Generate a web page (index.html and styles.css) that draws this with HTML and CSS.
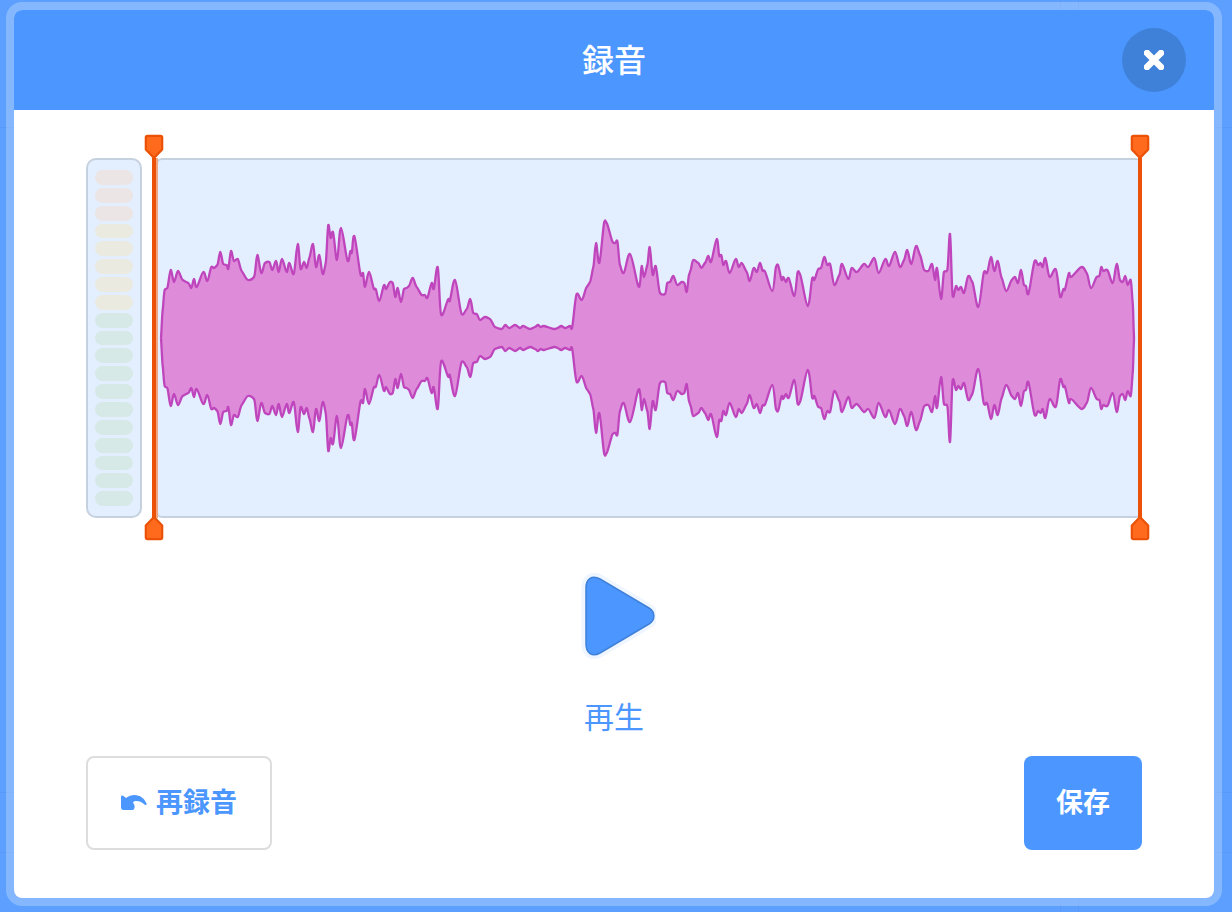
FILE: index.html
```html
<!DOCTYPE html>
<html lang="ja">
<head>
    <meta charset="UTF-8">
    <meta name="viewport" content="width=device-width, initial-scale=1.0">
    <title>録音</title>
    <link rel="stylesheet" href="styles.css">
</head>
<body>
    <div class="modal">
        <!-- Header -->
        <div class="modal-header">
            <div class="modal-title">録音</div>
            <button class="close-button" aria-label="閉じる">
                <svg width="20" height="20" viewBox="0 0 20 20">
                    <path class="close-icon" d="M3 3 L17 17 M17 3 L3 17"/>
                </svg>
            </button>
        </div>

        <div class="modal-body">
            <!-- Meter and waveform -->
            <div class="editor">
                <div class="meter">
                    <span class="pill pill-red"></span>
                    <span class="pill pill-red"></span>
                    <span class="pill pill-red"></span>
                    <span class="pill pill-yellow"></span>
                    <span class="pill pill-yellow"></span>
                    <span class="pill pill-yellow"></span>
                    <span class="pill pill-yellow"></span>
                    <span class="pill pill-yellow"></span>
                    <span class="pill pill-green"></span>
                    <span class="pill pill-green"></span>
                    <span class="pill pill-green"></span>
                    <span class="pill pill-green"></span>
                    <span class="pill pill-green"></span>
                    <span class="pill pill-green"></span>
                    <span class="pill pill-green"></span>
                    <span class="pill pill-green"></span>
                    <span class="pill pill-green"></span>
                    <span class="pill pill-green"></span>
                    <span class="pill pill-green"></span>
                </div>
                <div class="wave-panel">
                    <svg class="wave" viewBox="158 -178 982 356">
                        <defs>
                            <path id="envelope" d=""/>
                        </defs>
                        <use class="wave-shape" href="#envelope"/>
                        <use class="wave-shape" href="#envelope" transform="scale(1,-1)"/>
                    </svg>

                    <!-- Trim handles -->
                    <div class="trim-line trim-left">
                        <svg class="trim-head trim-head-top" width="20" height="26" viewBox="0 0 20 26"><path d="M3.500 1.800H16.500Q18.200 1.800 18.200 3.500V15.500L10 24L1.800 15.500V3.500Q1.800 1.800 3.500 1.800Z"/></svg>
                        <svg class="trim-head trim-head-bottom" width="20" height="26" viewBox="0 0 20 26"><path d="M3.500 24.200H16.500Q18.200 24.200 18.200 22.500V10.500L10 2L1.800 10.500V22.500Q1.800 24.200 3.500 24.200Z"/></svg>
                    </div>
                    <div class="trim-line trim-right">
                        <svg class="trim-head trim-head-top" width="20" height="26" viewBox="0 0 20 26"><path d="M3.500 1.800H16.500Q18.200 1.800 18.200 3.500V15.500L10 24L1.800 15.500V3.500Q1.800 1.800 3.500 1.800Z"/></svg>
                        <svg class="trim-head trim-head-bottom" width="20" height="26" viewBox="0 0 20 26"><path d="M3.500 24.200H16.500Q18.200 24.200 18.200 22.500V10.500L10 2L1.800 10.500V22.500Q1.800 24.200 3.500 24.200Z"/></svg>
                    </div>
                </div>
            </div>

            <!-- Play -->
            <div class="play-area">
                <svg class="play-icon" width="84" height="88" viewBox="0 0 84 88">
                    <path class="play-halo" d="M14 16C14 7 20 2.500 28 7L77 36C83.500 40 83.500 48 77 52L28 81C20 85.500 14 81 14 72Z"/>
                    <path class="play-shape" d="M14 16C14 7 20 2.500 28 7L77 36C83.500 40 83.500 48 77 52L28 81C20 85.500 14 81 14 72Z"/>
                </svg>
                <div class="play-label">再生</div>
            </div>

            <!-- Buttons -->
            <div class="modal-footer">
                <button class="retry-button">
                    <svg class="retry-icon" width="26" height="16" viewBox="0 0 26 16">
                        <path d="M0 2C0 .5 1.500 0 2.500 1L5 3C7.500 1 10.500 0 13.500 0C19 0 23.500 3.500 25.500 8.500C26 10 24.500 10.500 23.500 9.500C21 7 18 6 15.500 6C14 6 12.800 6.500 12 7.200L13 9.500C14 10.500 14 15 11.500 15H2.500C1 15 0 14 0 12.500Z"/>
                    </svg>
                    <span>再録音</span>
                </button>
                <button class="save-button">保存</button>
            </div>
        </div>
    </div>
    <script src="wave.js"></script>
</body>
</html>
```

FILE: styles.css
```css
body {
    margin: 0;
    height: 912px;
    overflow: hidden;
    background-color: #5c9fff;
    /* faint lines of the page behind the dialog */
    background-image:
        linear-gradient(rgba(60, 110, 200, 0.12), rgba(60, 110, 200, 0.12)),
        linear-gradient(rgba(60, 110, 200, 0.12), rgba(60, 110, 200, 0.12)),
        linear-gradient(rgba(60, 110, 200, 0.12), rgba(60, 110, 200, 0.12)),
        linear-gradient(rgba(60, 110, 200, 0.12), rgba(60, 110, 200, 0.12)),
        linear-gradient(rgba(60, 110, 200, 0.12), rgba(60, 110, 200, 0.12));
    background-size: 1px 100%, 1px 100%, 100% 1px, 100% 1px, 100% 1px;
    background-position: 1060px 0, 1078px 0, 0 127px, 0 792px, 0 852px;
    background-repeat: no-repeat;
    font-family: "Noto Sans CJK JP", "Noto Sans", sans-serif;
}
button {
    font-family: inherit;
    cursor: pointer;
}
.modal {
    box-sizing: border-box;
    width: 1216px;
    height: 904px;
    margin: 2px 0 0 6px;
    border: 8px solid rgba(255, 255, 255, 0.25);
    border-radius: 16px;
    background: #fff;
    background-clip: padding-box;
    display: flex;
    flex-direction: column;
}
.modal-header {
    height: 100px;
    flex-shrink: 0;
    border-radius: 8px 8px 0 0;
    background: #4c97ff;
    display: flex;
    align-items: center;
    justify-content: center;
    position: relative;
}
.modal-title {
    padding-bottom: 4px;
    color: #fff;
    font-size: 32px;
    font-weight: 500;
}
.close-button {
    position: absolute;
    top: 18px;
    right: 28px;
    width: 64px;
    height: 64px;
    padding: 0;
    border: none;
    border-radius: 50%;
    background: #3f81d9;
    display: flex;
    align-items: center;
    justify-content: center;
}
.close-icon {
    fill: none;
    stroke: #fff;
    stroke-width: 6.5;
    stroke-linecap: round;
}
.modal-body {
    flex: 1;
    padding: 48px 72px;
    display: flex;
    flex-direction: column;
}
.editor {
    height: 360px;
    display: flex;
    gap: 14px;
}
.meter {
    box-sizing: border-box;
    width: 56px;
    padding: 10px 7px;
    border: 2px solid #c6d1e0;
    border-radius: 10px;
    background: #e3efff;
    display: flex;
    flex-direction: column;
    gap: 3px;
}
.pill {
    flex: 1;
    border-radius: 8px;
}
.pill-red { background: #ebe5e5; }
.pill-yellow { background: #eaeae0; }
.pill-green { background: #d6e9e7; }
.wave-panel {
    flex: 1;
    box-sizing: border-box;
    border: 2px solid #c6d1e0;
    border-radius: 6px;
    background: #e3efff;
    position: relative;
}
.wave {
    display: block;
    width: 100%;
    height: 100%;
}
.wave-shape {
    fill: #de8cd9;
    stroke: #bf45bd;
    stroke-width: 2.3;
    stroke-linejoin: round;
}
.trim-line {
    position: absolute;
    top: -2px;
    bottom: -2px;
    width: 4px;
    background: #ec5207;
}
.trim-left {
    left: -6px;
    box-shadow: 2px 0 0 #efa582;
}
.trim-right {
    right: -2px;
}
.trim-head {
    position: absolute;
    left: -8px;
}
.trim-head path {
    fill: #ff6a1c;
    stroke: #ec5207;
    stroke-width: 2.2;
    stroke-linejoin: round;
}
.trim-head-top {
    top: -24px;
}
.trim-head-bottom {
    bottom: -23px;
}
.play-area {
    display: flex;
    flex-direction: column;
    align-items: center;
}
.play-icon {
    display: block;
    margin-top: 54px;
}
.play-halo {
    fill: none;
    stroke: #eff6ff;
    stroke-width: 9;
    stroke-linejoin: round;
}
.play-shape {
    fill: #4c97ff;
    stroke: #3f81d9;
    stroke-width: 1.5;
    stroke-linejoin: round;
}
.play-label {
    margin-top: 35px;
    color: #4c97ff;
    font-size: 30px;
    line-height: 40px;
}
.modal-footer {
    margin-top: 21px;
    display: flex;
    justify-content: space-between;
}
.retry-button {
    box-sizing: border-box;
    width: 186px;
    height: 94px;
    padding: 0;
    border: 2px solid #ddd;
    border-radius: 8px;
    background: #fff;
    color: #4c97ff;
    font-size: 27px;
    font-weight: 700;
    display: flex;
    align-items: center;
    justify-content: center;
    gap: 9px;
}
.retry-button span {
    padding-bottom: 6px;
}
.retry-icon path {
    fill: #4c97ff;
}
.save-button {
    width: 118px;
    height: 94px;
    padding: 0 0 6px;
    border: none;
    border-radius: 8px;
    background: #4c97ff;
    color: #fff;
    font-size: 27px;
    font-weight: 700;
}
```

FILE: wave.js
```js
// x on the page, then height above the centre line
const samples = [
    161,0, 162.7,28, 164.7,48, 167.3,50, 170.7,68, 174,56, 178,67, 182.7,58, 188.3,55, 191.3,50, 194,59, 196.7,51,
    203.3,66, 207.3,57, 211.3,71, 214,70, 217.3,73, 220.3,86, 223.3,74, 226.7,73, 228.3,69, 231,87, 234,77, 237.7,79,
    241.7,67, 248,58, 254,61, 257.3,83, 261.3,65, 265,75, 269.3,76, 272.3,68, 276,77, 278.7,66, 282,79, 286.7,66,
    289.3,75, 293.7,64, 297.7,94, 300.7,69, 304,76, 306.7,70, 309.3,80, 313,94, 316,71, 319.3,83, 322.7,64, 325.7,75,
    328.3,113, 330.7,100, 333,106, 337,78, 341,110, 347.7,77, 350.3,87, 351.7,85, 354.3,102, 360.7,63, 363,65, 365,51,
    369,66, 374,49, 375.7,49, 379.3,37, 384,53, 386,49, 390,56, 392.7,55, 395.3,41, 397.7,50, 401,36, 404,49, 406.7,50,
    409,52, 412.7,60, 416.7,51, 421.7,43, 425,43, 427.3,40, 431.7,55, 433.7,49, 437.7,71, 441.3,23, 448.3,39, 449.7,37,
    455,58, 461.7,24, 466.7,29, 470.3,39, 473.3,25, 476.7,24, 480,18, 485,21, 490,19, 495,11, 501.7,9, 505.3,13, 509.3,10,
    515,13, 520,10, 523.3,12, 530,9, 535,11, 538,13, 540.7,11, 544,12, 554,9, 557.7,10, 561.3,12, 565,10, 570,12, 572,10,
    576.7,44, 581.7,38, 586.7,51, 590,56, 593.3,71, 596,95, 599.3,75, 604.3,116, 606.7,115, 612.7,96, 615.3,95, 617.3,97,
    620,73, 623.7,65, 630,84, 638.3,52, 640,55, 641.7,72, 644,61, 647.3,73, 649.7,91, 652.7,63, 655.7,72, 660,45, 665,44,
    667.3,55, 670,56, 673.3,62, 677.3,53, 681.7,56, 684.3,55, 686.7,46, 689,63, 690.7,68, 693.3,78, 698.3,75, 701.3,70,
    705,75, 708.3,82, 711,76, 716.7,99, 719.3,82, 721.3,83, 723.3,73, 726,77, 729.7,65, 735.7,79, 738.7,71, 741.7,75,
    746.7,66, 749.7,57, 753.7,70, 756.7,66, 760,75, 762.7,67, 764.7,67, 772.3,47, 776,71, 778,73, 781.7,58, 783.3,61,
    786,56, 788.7,60, 794.3,42, 797.7,66, 800,64, 807.7,32, 812.3,60, 814.3,58, 818.3,69, 821,70, 824.3,81, 827.3,73,
    830,74, 834.3,53, 839.3,63, 842,74, 848.3,59, 851.7,70, 856.7,66, 864,74, 868.3,71, 874.3,80, 878.7,65, 885.3,79,
    889,72, 895,86, 900,71, 904,78, 907.3,88, 911.3,74, 916,92, 920,83, 924.3,68, 928.3,67, 932,74, 935,58, 937,70,
    941,39, 944,66, 947.3,68, 950,104, 952.7,42, 956,52, 958.3,48, 961,51, 964,45, 968.3,62, 972.3,56, 978.3,31, 984,66,
    987,65, 991,81, 994.3,67, 997.7,77, 1001.7,60, 1006.3,47, 1011.7,58, 1015,61, 1018,55, 1021,68, 1024,53, 1026,52,
    1028.3,44, 1034.7,77, 1038,73, 1040.7,75, 1042.7,71, 1045.3,80, 1049.7,61, 1055.7,69, 1060.3,41, 1063.3,49, 1064.7,48,
    1069,65, 1071,61, 1081.7,71, 1086.7,65, 1091,50, 1096.7,61, 1099.3,62, 1101.3,71, 1103.3,67, 1107.3,68, 1112.7,55,
    1116.7,74, 1120,58, 1122.7,56, 1125.3,62, 1127.7,53, 1130.7,58, 1132.7,35, 1133.7,8, 1134,0
];

// smooth line through the samples, tangents kept short so peaks don't overshoot
const points = [];
for (let i = 0; i < samples.length; i += 2) {
    points.push([samples[i], samples[i + 1]]);
}
let d = `M${points[0][0]} ${points[0][1]}`;
for (let i = 0; i < points.length - 1; i++) {
    const p0 = points[Math.max(i - 1, 0)];
    const p1 = points[i];
    const p2 = points[i + 1];
    const p3 = points[Math.min(i + 2, points.length - 1)];
    const c1x = p1[0] + (p2[0] - p0[0]) / 6;
    const c1y = p1[1] + (p2[1] - p0[1]) / 12;
    const c2x = p2[0] - (p3[0] - p1[0]) / 6;
    const c2y = p2[1] - (p3[1] - p1[1]) / 12;
    d += `C${c1x.toFixed(1)} ${c1y.toFixed(1)} ${c2x.toFixed(1)} ${c2y.toFixed(1)} ${p2[0]} ${p2[1]}`;
}
document.getElementById('envelope').setAttribute('d', d);
```
